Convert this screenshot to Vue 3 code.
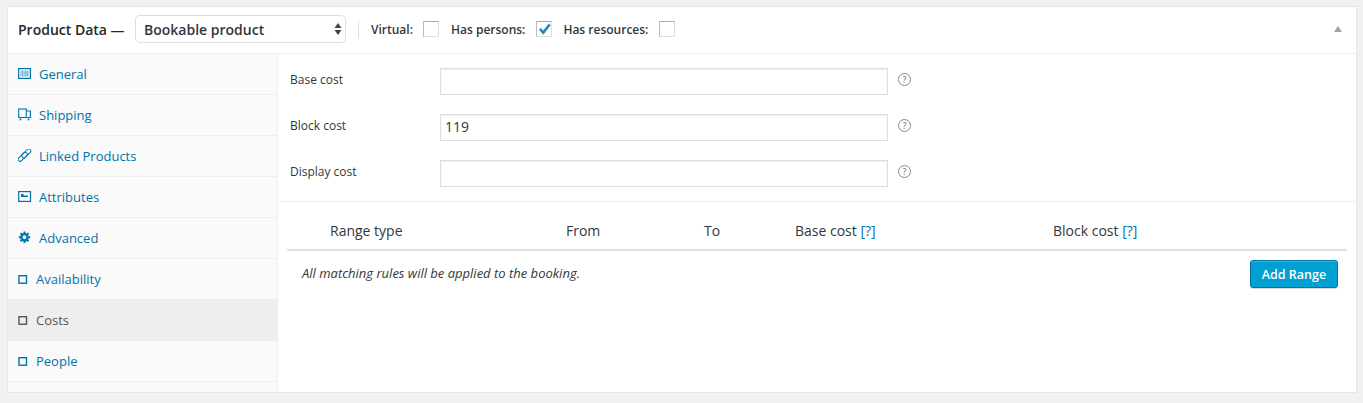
<template>
  <div class="panel">
    <div class="head">
      <span class="title">Product Data —</span>
      <div class="select">
        <span>Bookable product</span>
        <svg width="8" height="14" viewBox="0 0 8 14"><path d="M4 1l3.500 5h-7zM4 13L.5 8h7z" fill="#444" /></svg>
      </div>
      <span class="sep"></span>
      <span class="opt">Virtual:</span>
      <span class="check"></span>
      <span class="opt persons">Has persons:</span>
      <span class="check">
        <svg width="16" height="16" viewBox="0 0 16 16"><path d="M2 7.700l1.800-1.800 2.400 2.500L11.800 1.500 13.700 3.200 6.300 12.700z" fill="#1e8cbe" /></svg>
      </span>
      <span class="opt resources">Has resources:</span>
      <span class="check"></span>
      <svg class="toggle" width="8" height="6" viewBox="0 0 8 6"><path d="M4 0L8 6H0z" fill="#a0a5aa" /></svg>
    </div>
    <div class="main">
      <ul class="tabs">
        <li v-for="tab in tabs" :key="tab.name" :class="{ active: tab.name === 'Costs', plain: tab.icon === 'box' }">
          <svg width="16" height="14" viewBox="0 0 16 14" fill="none" stroke="currentColor">
            <template v-if="tab.icon === 'general'">
              <rect x=".6" y="1.600" width="11.800" height="9.800" stroke-width="1.200" />
              <path d="M3 3.500v6M4.500 3.500v6M6 3.500v6M7.500 3.500v6M9 3.500v6M10 3.500v6" stroke-width="1" opacity=".55" />
            </template>
            <template v-else-if="tab.icon === 'ship'">
              <rect x=".7" y="1" width="7.600" height="8.500" stroke-width="1.100" />
              <path d="M8.300 3h4.100v6.500H8.300" stroke-width="1.100" />
              <circle cx="2.400" cy="11.500" r="1" fill="currentColor" stroke="none" />
              <circle cx="10.500" cy="11.500" r="1" fill="currentColor" stroke="none" />
            </template>
            <template v-else-if="tab.icon === 'link'">
              <rect x="-5.500" y="-2" width="11" height="4" rx="2" transform="translate(4.700 7.800) rotate(-45)" stroke-width="1" />
              <rect x="-5.500" y="-2" width="11" height="4" rx="2" transform="translate(8.300 4.400) rotate(-45)" stroke-width="1" />
            </template>
            <template v-else-if="tab.icon === 'attr'">
              <rect x=".7" y="1.600" width="11.800" height="9.800" stroke-width="1.200" />
              <path d="M3 4h2.500v1.600H10v1.300H3z" fill="currentColor" stroke="none" />
            </template>
            <template v-else-if="tab.icon === 'gear'">
              <circle cx="6.500" cy="6.200" r="3.100" stroke-width="2.300" />
              <path d="M6.500 .5v11.400M.8 6.200h11.400M2.500 2.200l8 8M10.500 2.200l-8 8" stroke-width="2" stroke-dasharray="2 7.400" />
            </template>
            <rect v-else x="1" y="3.700" width="7.500" height="7.500" stroke-width="1.400" />
          </svg>
          <span>{{ tab.name }}</span>
        </li>
      </ul>
      <div class="content">
        <div class="fields">
          <div v-for="f in fields" :key="f.label" class="field">
            <label>{{ f.label }}</label>
            <div class="input">{{ f.value }}</div>
            <span class="help">?</span>
          </div>
        </div>
        <div class="ranges">
          <div class="range-head">
            <span>Range type</span>
            <span>From</span>
            <span>To</span>
            <span>Base cost <a>[?]</a></span>
            <span>Block cost <a>[?]</a></span>
          </div>
          <div class="range-foot">
            <em>All matching rules will be applied to the booking.</em>
            <button>Add Range</button>
          </div>
        </div>
      </div>
    </div>
  </div>
</template>

<script setup>
const tabs = [
  { name: 'General', icon: 'general' },
  { name: 'Shipping', icon: 'ship' },
  { name: 'Linked Products', icon: 'link' },
  { name: 'Attributes', icon: 'attr' },
  { name: 'Advanced', icon: 'gear' },
  { name: 'Availability', icon: 'box' },
  { name: 'Costs', icon: 'box' },
  { name: 'People', icon: 'box' }
]

const fields = [
  { label: 'Base cost', value: '' },
  { label: 'Block cost', value: '119' },
  { label: 'Display cost', value: '' }
]
</script>

<style>
body {
  background: #f1f1f1;
}
</style>

<style scoped>
.panel {
  margin: 6px 6px 0 7px;
  height: 387px;
  box-sizing: border-box;
  background: #fff;
  border: 1px solid #e5e5e5;
  box-shadow: 0 1px 1px rgba(0, 0, 0, 0.04);
  font-family: 'Open Sans', sans-serif;
  font-size: 13px;
  color: #32373c;
  display: flex;
  flex-direction: column;
}

.head {
  height: 47px;
  flex: none;
  box-sizing: border-box;
  border-bottom: 1px solid #eee;
  display: flex;
  align-items: center;
  padding: 0 0 2px 10px;
}

.title {
  font-size: 14px;
  font-weight: 600;
  color: #23282d;
  width: 117px;
}

.select {
  width: 211px;
  height: 28px;
  box-sizing: border-box;
  border: 1px solid #ddd;
  border-radius: 5px;
  display: flex;
  align-items: center;
  justify-content: space-between;
  padding: 0 3px 0 8px;
  font-size: 14px;
  font-weight: 600;
  color: #32373c;
}

.sep {
  width: 1px;
  height: 17px;
  background: #ddd;
  margin: 0 12px;
}

.opt {
  font-size: 12px;
  font-weight: 600;
  color: #32373c;
  margin-right: 10px;
}

.persons,
.resources {
  margin-left: 12px;
  margin-right: 11px;
}

.resources {
  margin-left: 11px;
}

.check {
  width: 16px;
  height: 16px;
  box-sizing: border-box;
  border: 1px solid #ddd;
  border-top-color: #aaa;
  border-left-color: #bbb;
  background: #fff;
  display: block;
}

.check svg {
  display: block;
}

.toggle {
  margin-left: auto;
  margin-right: 14px;
}

.main {
  flex: 1;
  display: flex;
  min-height: 0;
}

.tabs {
  width: 270px;
  flex: none;
  box-sizing: border-box;
  margin: 0;
  padding: 0;
  list-style: none;
  background: #fafafa;
  border-right: 1px solid #eee;
}

.tabs li {
  height: 41px;
  box-sizing: border-box;
  border-bottom: 1px solid #eee;
  display: flex;
  align-items: center;
  padding-left: 10px;
  color: #0073aa;
}

.tabs li svg {
  width: 16px;
  margin-right: 5px;
}

.tabs li.plain svg {
  margin-right: 2px;
}

.tabs li.active {
  background: #eee;
  color: #555;
}

.content {
  flex: 1;
  min-width: 0;
}

.fields {
  padding: 4px 0 5px;
  border-bottom: 1px solid #eee;
}

.field {
  height: 46px;
  display: flex;
  align-items: center;
  padding-left: 12px;
  font-size: 12px;
  color: #32373c;
}

.field label {
  width: 150px;
  padding-bottom: 4px;
}

.input {
  width: 448px;
  height: 27px;
  box-sizing: border-box;
  border: 1px solid #ddd;
  box-shadow: inset 0 1px 2px rgba(0, 0, 0, 0.07);
  padding: 0 4px;
  font-size: 14px;
  line-height: 24px;
  color: #32373c;
}

.help {
  width: 13px;
  height: 13px;
  box-sizing: border-box;
  border: 1px solid #888;
  border-radius: 50%;
  margin: 0 0 4px 10px;
  font-size: 9px;
  line-height: 11px;
  text-align: center;
  color: #666;
}

.ranges {
  padding: 0 9px;
}

.range-head {
  height: 49px;
  box-sizing: border-box;
  border-bottom: 2px solid #e1e1e1;
  display: grid;
  grid-template-columns: 236px 138px 91px 258px 1fr;
  align-items: center;
  padding: 9px 0 0 43px;
  font-size: 14px;
  color: #32373c;
}

.range-head a {
  color: #0073aa;
}

.range-foot {
  display: flex;
  align-items: center;
  justify-content: space-between;
  padding: 9px 9px 0 15px;
  font-size: 13px;
}

.range-foot em {
  font-style: italic;
  color: #32373c;
  margin-bottom: 2px;
}

.range-foot button {
  height: 28px;
  width: 88px;
  padding: 0;
  box-sizing: border-box;
  border: 1px solid #0073aa;
  border-radius: 3px;
  background: #00a0d2;
  color: #fff;
  font-family: inherit;
  font-size: 12.5px;
  font-weight: 600;
  box-shadow: inset 0 1px 0 rgba(120, 200, 230, 0.5), 0 1px 0 rgba(0, 0, 0, 0.15);
}
</style>
